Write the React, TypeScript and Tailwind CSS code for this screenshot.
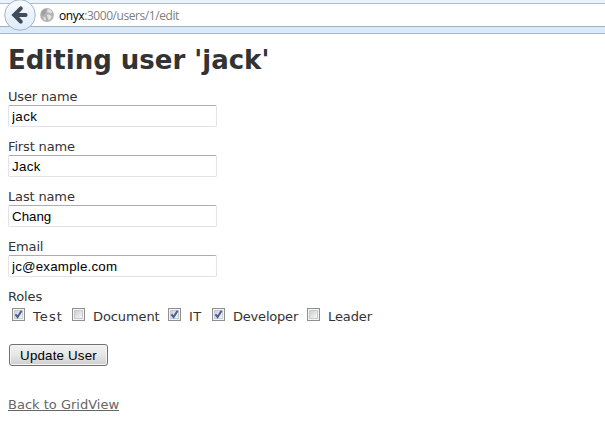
const fields = [
  { label: 'User name', value: 'jack', spacing: 'tracking-[0.4px]' },
  { label: 'First name', value: 'Jack', spacing: 'tracking-[0.3px]' },
  { label: 'Last name', value: 'Chang', spacing: 'tracking-[0px]' },
  { label: 'Email', value: 'jc@example.com', spacing: 'tracking-[0.2px]' },
];

const roles = [
  { name: 'Test', on: true, width: 'w-[60px]', spacing: 'tracking-[1.1px]' },
  { name: 'Document', on: false, width: 'w-[96px]', spacing: 'tracking-[-0.1px]' },
  { name: 'IT', on: true, width: 'w-[44px]', spacing: 'tracking-[0.4px]' },
  { name: 'Developer', on: true, width: 'w-[95px]', spacing: 'tracking-[-0.2px]' },
  { name: 'Leader', on: false, width: 'w-[80px]', spacing: 'tracking-[-0.1px]' },
];

function BackButton() {
  return (
    <svg className="absolute left-[3px] top-0 h-[32px] w-[34px]" viewBox="0 0 34 32">
      <defs>
        <linearGradient id="back" x1="0" y1="0" x2="0" y2="1">
          <stop offset="0" stopColor="#f7fbff" />
          <stop offset="1" stopColor="#deebf9" />
        </linearGradient>
      </defs>
      <circle cx="17" cy="15" r="15.3" fill="url(#back)" stroke="#a4b5c8" />
      <path
        d="M17.8 8.4 L11.2 15 L17.8 21.6 M12 15 H22.6"
        fill="none"
        stroke="#424b5a"
        strokeWidth="4"
        strokeLinecap="round"
        strokeLinejoin="miter"
      />
    </svg>
  );
}

function Globe() {
  return (
    <svg className="h-[14px] w-[14px] shrink-0" viewBox="0 0 14 14">
      <circle cx="7" cy="7" r="6.9" fill="#b2b2b2" />
      <path d="M1.2 5 L3 2.2 L5.5 1 L7 2.4 L5.4 3.6 L5.8 5 L3.8 6.4 L2.6 8.4Z" fill="#9f9f9f" />
      <path d="M7.6 1 L10.6 1.8 L12.6 4.4 L10.4 5.2 L8.4 4.2 L7.2 4.8Z" fill="#e2e2e2" />
      <path d="M6.6 6.8 L9.6 6.6 L11.8 8.4 L10.6 11 L8.6 12.4 L7.8 9.8Z" fill="#e2e2e2" />
      <path d="M3.4 8.6 L5.8 9.6 L6 12.4 L3.6 11.4Z" fill="#dcdcdc" />
    </svg>
  );
}

function Checkbox({ on }: { on: boolean }) {
  return (
    <svg className="mt-[-1px] h-[13px] w-[13px] shrink-0" viewBox="0 0 13 13">
      <defs>
        <linearGradient id="box" x1="0" y1="0" x2="1" y2="1">
          <stop offset="0" stopColor="#cbcfd5" />
          <stop offset="1" stopColor="#f6f6f6" />
        </linearGradient>
      </defs>
      <rect x="0.5" y="0.5" width="12" height="12" fill="#f4f4f4" stroke="#8e8f8f" />
      <rect x="2" y="2" width="9" height="9" fill="#c8ccd1" />
      <rect x="3" y="3" width="7" height="7" fill="url(#box)" />
      {on && <path d="M3.4 6.3 L5.6 9 L9.6 2.8" fill="none" stroke="#4a5f97" strokeWidth="2" />}
    </svg>
  );
}

export default function App() {
  return (
    <div className="h-[423px] w-[605px] overflow-hidden bg-white font-['DejaVu_Sans',sans-serif] text-[13px] text-[#333]">
      <header className="relative h-[34px] border-b border-[#a9b8ca] bg-[#dbeaf9]">
        <div className="h-[3px] bg-[#eaf3fc]" />
        <div className="flex h-[24px] items-center border-y border-t-[#afbfd1] border-b-[#9cafc4] bg-white pl-[40px]">
          <Globe />
          <span className="ml-[5px] mt-[2px] font-['Open_Sans',sans-serif] text-[12px] leading-[22px] tracking-[-0.43px] text-[#808080]">
            <span className="text-black">onyx</span>:3000/users/1/edit
          </span>
        </div>
        <BackButton />
      </header>
      <main className="px-2 pt-[10px]">
        <h1 className="h-[45px] whitespace-nowrap text-[26px] font-bold leading-[33px]">Editing user 'jack'</h1>
        <form>
          {fields.map((f) => (
            <div key={f.label} className="h-[50px]">
              <label className="block h-4 leading-4 tracking-[-0.15px]">{f.label}</label>
              <input
                readOnly
                defaultValue={f.value}
                className={`block h-[22px] w-[209px] rounded-[2px] border border-[#e2e3ea] border-t-[#abadb3] bg-white px-[3px] font-['Liberation_Sans',sans-serif] text-[13.33px] text-black ${f.spacing}`}
              />
            </div>
          ))}
          <div className="h-4 leading-4 tracking-[-0.15px]">Roles</div>
          <div className="flex h-5 pl-1">
            {roles.map((r) => (
              <label key={r.name} className={`flex h-5 items-center ${r.width}`}>
                <Checkbox on={r.on} />
                <span className={`ml-2 mt-[3px] leading-4 ${r.spacing}`}>{r.name}</span>
              </label>
            ))}
          </div>
          <button
            type="button"
            className="ml-px mt-[19px] block h-[22px] w-[99px] rounded-[3px] border border-[#707070] bg-linear-to-b from-[#f2f2f2] via-[#e6e6e6] to-[#cfcfcf] pt-px font-['Liberation_Sans',sans-serif] text-[13.33px] leading-5 tracking-[0.18px] text-black shadow-[inset_0_0_0_1px_#f5f5f5]"
          >
            Update User
          </button>
        </form>
        <a className="mt-[31px] inline-block leading-4 text-[#666] underline">Back to GridView</a>
      </main>
    </div>
  );
}
